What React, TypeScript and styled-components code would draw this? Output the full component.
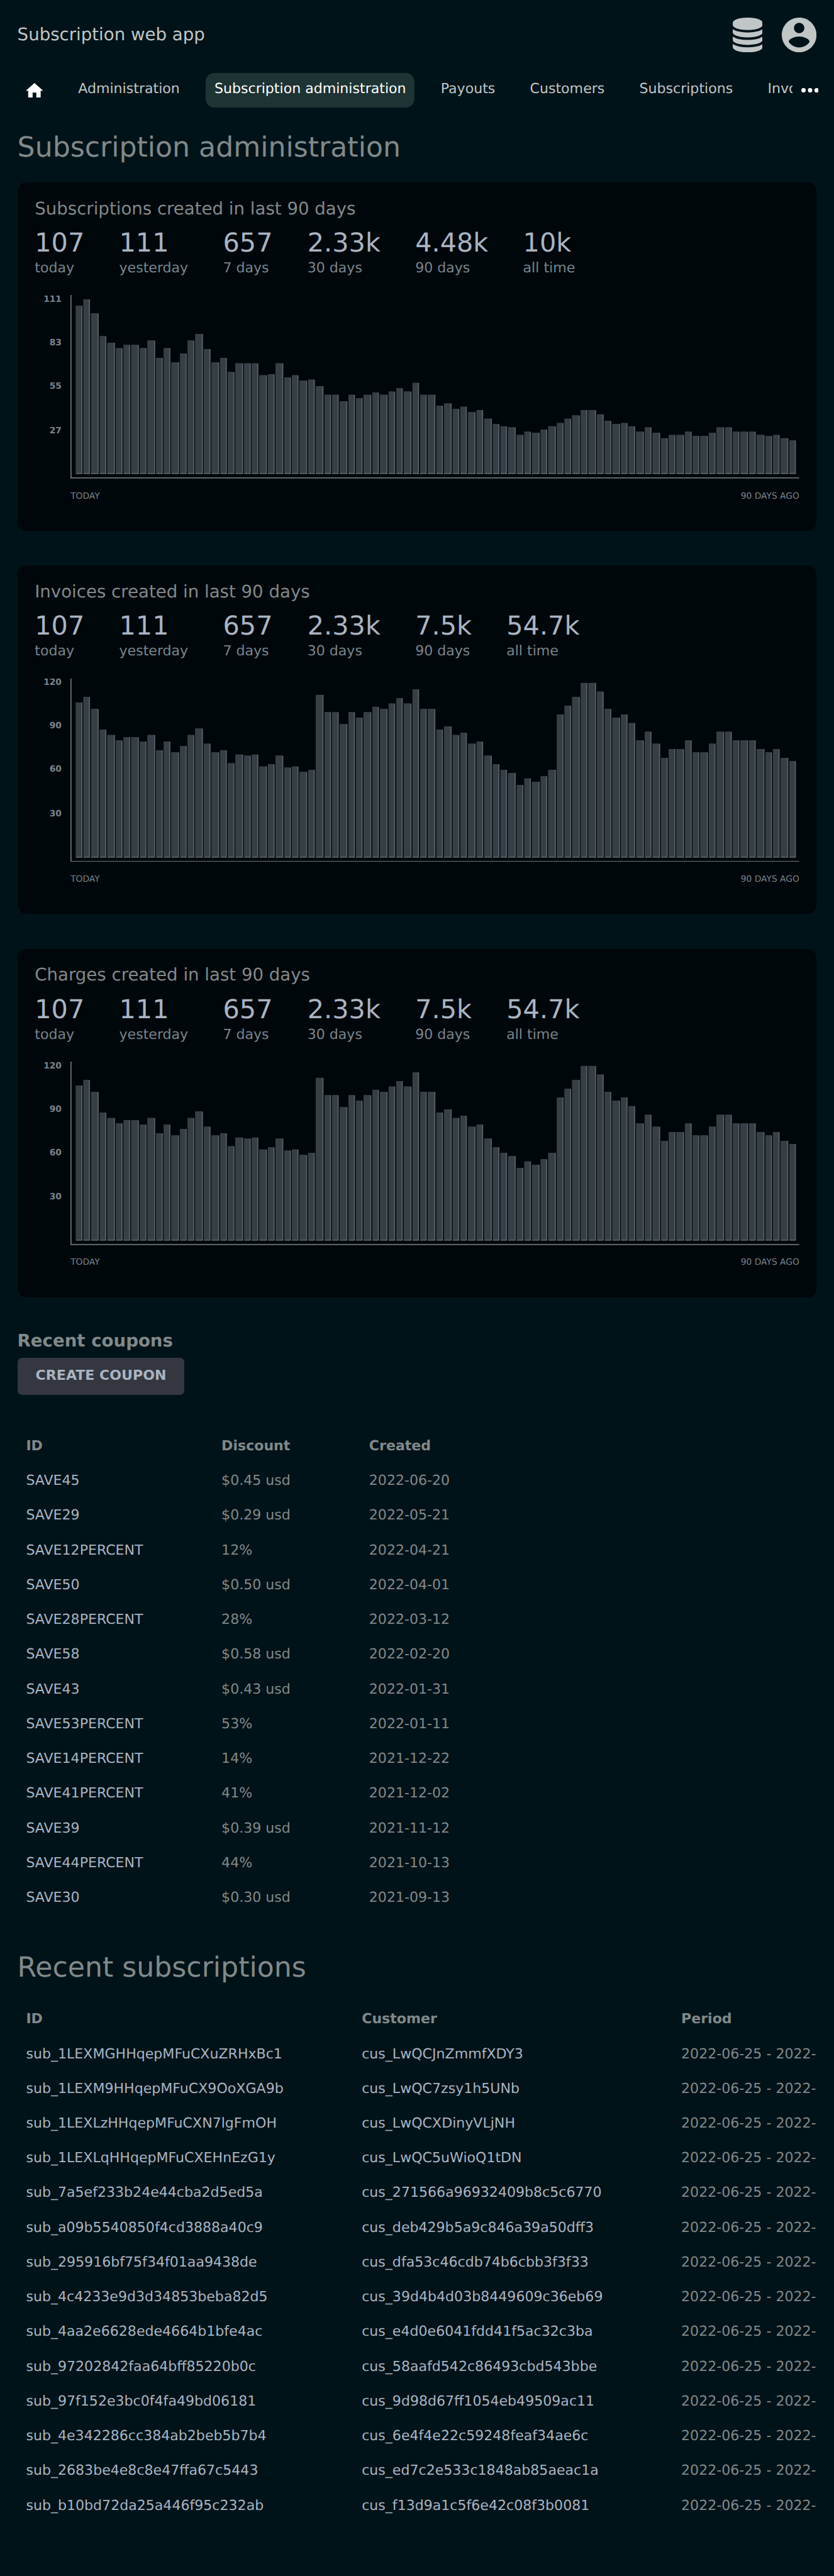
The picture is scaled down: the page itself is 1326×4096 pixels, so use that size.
import React from 'react';
import styled, { createGlobalStyle } from 'styled-components';

const Global = createGlobalStyle`
  html { font-size: 8.6304px; background: #001318; }
  body {
    margin: 0;
    font-family: "DejaVu Sans", Verdana, sans-serif;
    text-rendering: geometricPrecision;
    color: #80898a;
  }
  * { box-sizing: border-box; }
`;

const Page = styled.div`
  height: 4096px;
  overflow: hidden;
  background: #001318;
`;

const Header = styled.header`
  display: flex;
  justify-content: space-between;
  align-items: flex-start;
  height: 13.4rem;
  padding: 3.2rem 3.2rem 0;
`;

const Brand = styled.div`
  font-size: 3.2rem;
  line-height: 6.24rem;
  color: #c0c6c6;
`;

const HeaderIcons = styled.div`
  display: flex;
  gap: 3.6rem;
  color: #c0c6c6;
`;

const HeaderIcon = styled.svg<{ $w: number }>`
  display: block;
  width: ${(p) => p.$w}rem;
  height: 6.4rem;
  fill: currentColor;
`;

const Nav = styled.nav`
  display: flex;
  height: 6.4rem;
  padding: 0 3.2rem;
`;

const NavScroller = styled.div`
  display: flex;
  flex: 1;
  gap: 3.2rem;
  min-width: 0;
  overflow: hidden;
`;

const NavItem = styled.a<{ $active?: boolean }>`
  flex: none;
  height: 6.4rem;
  padding: 0 1.6rem;
  border-radius: 1.6rem;
  font-size: 2.56rem;
  line-height: 5.98rem;
  color: ${(p) => (p.$active ? '#ffffff' : '#c0c6c6')};
  background: ${(p) => (p.$active ? '#1e3333' : 'transparent')};
`;

const NavIcon = styled.svg<{ $h: number; $top: number }>`
  display: block;
  width: 3.2rem;
  height: ${(p) => p.$h}rem;
  margin-top: ${(p) => p.$top}rem;
  fill: #ffffff;
`;

const NavMore = styled.div`
  flex: none;
  width: 4.4rem;
  padding-left: 1.55rem;
`;

const PageTitle = styled.h1<{ $top: number; $bottom: number }>`
  margin: ${(p) => p.$top}rem 3.2rem ${(p) => p.$bottom}rem;
  font-size: 5.12rem;
  font-weight: 400;
  line-height: 6rem;
`;

const Cards = styled.div`
  display: flex;
  flex-direction: column;
  gap: 6.4rem;
  padding: 0 3.2rem;
`;

const Card = styled.section`
  height: 64.2rem;
  padding: 3.31rem 3.2rem 0;
  border-radius: 1.6rem;
  background: #00070a;
`;

const CardTitle = styled.h2`
  margin: 0 0 1.71rem;
  font-size: 3.2rem;
  font-weight: 400;
  line-height: 3.1rem;
`;

const Stats = styled.div`
  display: flex;
  gap: 6.4rem;
  height: 12.68rem;
`;

const StatValue = styled.div`
  height: 6.16rem;
  font-size: 4.8rem;
  line-height: 6.24rem;
  color: #a9b4c2;
`;

const StatLabel = styled.div`
  font-size: 2.56rem;
  line-height: 3.04rem;
  color: #77858d;
`;

const ChartRow = styled.div`
  display: flex;
  color: #77858d;
`;

const YAxis = styled.div`
  width: 6.6rem;
  padding: 0.07rem 1.65rem 0 0;
  text-align: right;
  font-size: 1.6rem;
  font-weight: 700;
`;

const YLabel = styled.div`
  height: 8rem;
  line-height: 1.4rem;
  &:last-child { padding-top: 0.16rem; }
`;

const ChartSvg = styled.svg`
  display: block;
  flex: 1;
  height: 33.8rem;
`;

const XAxis = styled.div`
  display: flex;
  justify-content: space-between;
  padding: 2.25rem 0 0 6.6rem;
  font-size: 1.6rem;
  line-height: 2rem;
  color: #77858d;
`;

const SectionTitle = styled.h2`
  margin: 6.49rem 3.2rem 1.65rem;
  font-size: 3.2rem;
  line-height: 3.06rem;
`;

const Button = styled.button`
  display: block;
  width: 30.8rem;
  height: 6.8rem;
  margin: 0 0 6.1rem 3.2rem;
  padding: 0.1rem 0 0;
  border: 0;
  border-radius: 0.8rem;
  font: 700 2.56rem/6.2rem "DejaVu Sans", sans-serif;
  text-transform: uppercase;
  display: flex;
  justify-content: center;
  align-items: flex-start;
  color: #a9b4c2;
  background: #34373f;
`;

const Table = styled.div`
  margin: 0 3.2rem;
  overflow: hidden;
  font-size: 2.56rem;
  line-height: 6rem;
`;

const Row = styled.div<{ $cols: string; $head?: boolean }>`
  display: grid;
  grid-template-columns: ${(p) => p.$cols};
  height: 6.4rem;
  padding: 0.39rem 0 0 1.6rem;
  white-space: nowrap;
  font-weight: ${(p) => (p.$head ? 700 : 400)};
`;

const LinkCell = styled.span`
  color: #a9b4c2;
`;

// Bar heights, newest day first.
const subscriptionBars = [
  155, 161, 148, 127, 121, 116, 119, 119, 116, 123, 107, 116, 103, 111, 123, 129, 115, 103, 107, 94,
  102, 102, 102, 91, 92, 102, 89, 91, 86, 87, 81, 73, 73, 67, 73, 70, 73, 75, 73, 76, 79, 76, 84,
  73, 73, 63, 65, 60, 62, 57, 59, 51, 46, 44, 43, 36, 39, 38, 41, 44, 47, 51, 54, 59, 59, 55, 49,
  46, 47, 44, 39, 43, 38, 33, 36, 36, 39, 35, 35, 38, 43, 43, 39, 39, 39, 36, 35, 36, 33, 31,
];

const invoiceBars = [
  143, 148, 137, 118, 113, 108, 111, 111, 107, 113, 99, 107, 97, 103, 113, 119, 105, 97, 99, 87,
  95, 94, 95, 84, 86, 94, 83, 84, 79, 81, 150, 134, 134, 123, 134, 129, 134, 139, 137, 142, 147, 142, 155,
  137, 137, 118, 121, 113, 115, 105, 107, 94, 86, 81, 78, 67, 73, 70, 75, 81, 132, 140, 148, 161, 161, 153, 137,
  129, 132, 124, 108, 116, 105, 92, 100, 100, 108, 97, 97, 105, 116, 116, 108, 108, 108, 100, 97, 100, 92, 89,
];

const barStart = (k: number) => 2 * Math.round(69.68 + 7.382 * k) - 130;

function BarChart({ bars }: { bars: number[] }) {
  return (
    <ChartSvg viewBox="0 0 1342 338" preserveAspectRatio="none">
      {bars.map((b, k) => {
        const x = barStart(k);
        const w = barStart(k + 1) - 2 - x;
        const h = b * 2;
        return (
          <g key={k}>
            <rect x={x} y={330 - h} width={w} height={h} fill="#576368" />
            <rect x={x} y={330 - h} width={w - 2} height={h - 2} fill="#373f46" />
          </g>
        );
      })}
      <rect x={0} y={0} width={2} height={338} fill="#6b757d" />
      <rect x={0} y={336} width={1342} height={2} fill="#6b757d" />
    </ChartSvg>
  );
}

type ChartData = { title: string; stats: [string, string][]; ticks: number[]; bars: number[] };

const invoiceStats: [string, string][] = [
  ['107', 'today'], ['111', 'yesterday'], ['657', '7 days'],
  ['2.33k', '30 days'], ['7.5k', '90 days'], ['54.7k', 'all time'],
];

const charts: ChartData[] = [
  {
    title: 'Subscriptions created in last 90 days',
    stats: [
      ['107', 'today'], ['111', 'yesterday'], ['657', '7 days'],
      ['2.33k', '30 days'], ['4.48k', '90 days'], ['10k', 'all time'],
    ],
    ticks: [111, 83, 55, 27],
    bars: subscriptionBars,
  },
  { title: 'Invoices created in last 90 days', stats: invoiceStats, ticks: [120, 90, 60, 30], bars: invoiceBars },
  { title: 'Charges created in last 90 days', stats: invoiceStats, ticks: [120, 90, 60, 30], bars: invoiceBars },
];

const coupons = [
  ['SAVE45', '$0.45 usd', '2022-06-20'],
  ['SAVE29', '$0.29 usd', '2022-05-21'],
  ['SAVE12PERCENT', '12%', '2022-04-21'],
  ['SAVE50', '$0.50 usd', '2022-04-01'],
  ['SAVE28PERCENT', '28%', '2022-03-12'],
  ['SAVE58', '$0.58 usd', '2022-02-20'],
  ['SAVE43', '$0.43 usd', '2022-01-31'],
  ['SAVE53PERCENT', '53%', '2022-01-11'],
  ['SAVE14PERCENT', '14%', '2021-12-22'],
  ['SAVE41PERCENT', '41%', '2021-12-02'],
  ['SAVE39', '$0.39 usd', '2021-11-12'],
  ['SAVE44PERCENT', '44%', '2021-10-13'],
  ['SAVE30', '$0.30 usd', '2021-09-13'],
];

const subscriptions = [
  ['sub_1LEXMGHHqepMFuCXuZRHxBc1', 'cus_LwQCJnZmmfXDY3'],
  ['sub_1LEXM9HHqepMFuCX9OoXGA9b', 'cus_LwQC7zsy1h5UNb'],
  ['sub_1LEXLzHHqepMFuCXN7lgFmOH', 'cus_LwQCXDinyVLjNH'],
  ['sub_1LEXLqHHqepMFuCXEHnEzG1y', 'cus_LwQC5uWioQ1tDN'],
  ['sub_7a5ef233b24e44cba2d5ed5a', 'cus_271566a96932409b8c5c6770'],
  ['sub_a09b5540850f4cd3888a40c9', 'cus_deb429b5a9c846a39a50dff3'],
  ['sub_295916bf75f34f01aa9438de', 'cus_dfa53c46cdb74b6cbb3f3f33'],
  ['sub_4c4233e9d3d34853beba82d5', 'cus_39d4b4d03b8449609c36eb69'],
  ['sub_4aa2e6628ede4664b1bfe4ac', 'cus_e4d0e6041fdd41f5ac32c3ba'],
  ['sub_97202842faa64bff85220b0c', 'cus_58aafd542c86493cbd543bbe'],
  ['sub_97f152e3bc0f4fa49bd06181', 'cus_9d98d67ff1054eb49509ac11'],
  ['sub_4e342286cc384ab2beb5b7b4', 'cus_6e4f4e22c59248feaf34ae6c'],
  ['sub_2683be4e8c8e47ffa67c5443', 'cus_ed7c2e533c1848ab85aeac1a'],
  ['sub_b10bd72da25a446f95c232ab', 'cus_f13d9a1c5f6e42c08f3b0081'],
];

const couponCols = '36rem 27.2rem 1fr';
const subscriptionCols = '61.85rem 58.85rem 1fr';

const navLinks = ['Administration', 'Subscription administration', 'Payouts', 'Customers', 'Subscriptions', 'Invoices'];

export default function App() {
  return (
    <Page>
      <Global />
      <Header>
        <Brand>Subscription web app</Brand>
        <HeaderIcons>
          <HeaderIcon $w={5.5} viewBox="0 0 1536 1792">
            <path d="M768 768q237 0 443-43t325-127v170q0 69-103 128t-280 93.5-385 34.5-385-34.5-280-93.5-103-128v-170q119 84 325 127t443 43zm0 768q237 0 443-43t325-127v170q0 69-103 128t-280 93.5-385 34.5-385-34.5-280-93.5-103-128v-170q119 84 325 127t443 43zm0-384q237 0 443-43t325-127v170q0 69-103 128t-280 93.5-385 34.5-385-34.5-280-93.5-103-128v-170q119 84 325 127t443 43zm0-1152q208 0 385 34.5t280 93.5 103 128v128q0 69-103 128t-280 93.5-385 34.5-385-34.5-280-93.5-103-128v-128q0-69 103-128t280-93.5 385-34.5z" />
          </HeaderIcon>
          <HeaderIcon $w={6.4} viewBox="2 2 20 20">
            <path d="M12 2C6.48 2 2 6.48 2 12s4.48 10 10 10 10-4.48 10-10S17.52 2 12 2zm0 3c1.66 0 3 1.34 3 3s-1.34 3-3 3-3-1.34-3-3 1.34-3 3-3zm0 14.2c-2.5 0-4.71-1.28-6-3.22.03-1.99 4-3.08 6-3.08 1.99 0 5.97 1.09 6 3.08-1.29 1.94-3.5 3.22-6 3.22z" />
          </HeaderIcon>
        </HeaderIcons>
      </Header>
      <Nav>
        <NavScroller>
          <NavItem>
            <NavIcon $h={2.74} $top={1.84} viewBox="0 0 32 27.4">
              <path d="M16 0L32 14.3H27.4V27.4H19.4V17.8H12.6V27.4H4.4V14.3H0z" />
            </NavIcon>
          </NavItem>
          {navLinks.map((label) => (
            <NavItem key={label} $active={label === 'Subscription administration'}>{label}</NavItem>
          ))}
        </NavScroller>
        <NavMore>
          <NavIcon $h={0.84} $top={2.78} viewBox="0 0 32 8.4">
            <circle cx="4.1" cy="4.2" r="4.1" />
            <circle cx="16.2" cy="4.2" r="4.1" />
            <circle cx="28.3" cy="4.2" r="4.1" />
          </NavIcon>
        </NavMore>
      </Nav>
      <PageTitle $top={4.37} $bottom={3.43}>Subscription administration</PageTitle>
      <Cards>
        {charts.map((c) => (
          <Card key={c.title}>
            <CardTitle>{c.title}</CardTitle>
            <Stats>
              {c.stats.map(([value, label]) => (
                <div key={label}>
                  <StatValue>{value}</StatValue>
                  <StatLabel>{label}</StatLabel>
                </div>
              ))}
            </Stats>
            <ChartRow>
              <YAxis>
                {c.ticks.map((t) => <YLabel key={t}>{t}</YLabel>)}
              </YAxis>
              <BarChart bars={c.bars} />
            </ChartRow>
            <XAxis>
              <span>TODAY</span>
              <span>90 DAYS AGO</span>
            </XAxis>
          </Card>
        ))}
      </Cards>
      <SectionTitle>Recent coupons</SectionTitle>
      <Button>Create coupon</Button>
      <Table>
        <Row $cols={couponCols} $head>
          <span>ID</span><span>Discount</span><span>Created</span>
        </Row>
        {coupons.map(([id, discount, created]) => (
          <Row key={id} $cols={couponCols}>
            <LinkCell>{id}</LinkCell><span>{discount}</span><span>{created}</span>
          </Row>
        ))}
      </Table>
      <PageTitle $top={6.87} $bottom={3.13}>Recent subscriptions</PageTitle>
      <Table>
        <Row $cols={subscriptionCols} $head>
          <span>ID</span><span>Customer</span><span>Period</span>
        </Row>
        {subscriptions.map(([id, customer]) => (
          <Row key={id} $cols={subscriptionCols}>
            <LinkCell>{id}</LinkCell><LinkCell>{customer}</LinkCell><span>2022-06-25 - 2022-</span>
          </Row>
        ))}
      </Table>
    </Page>
  );
}
